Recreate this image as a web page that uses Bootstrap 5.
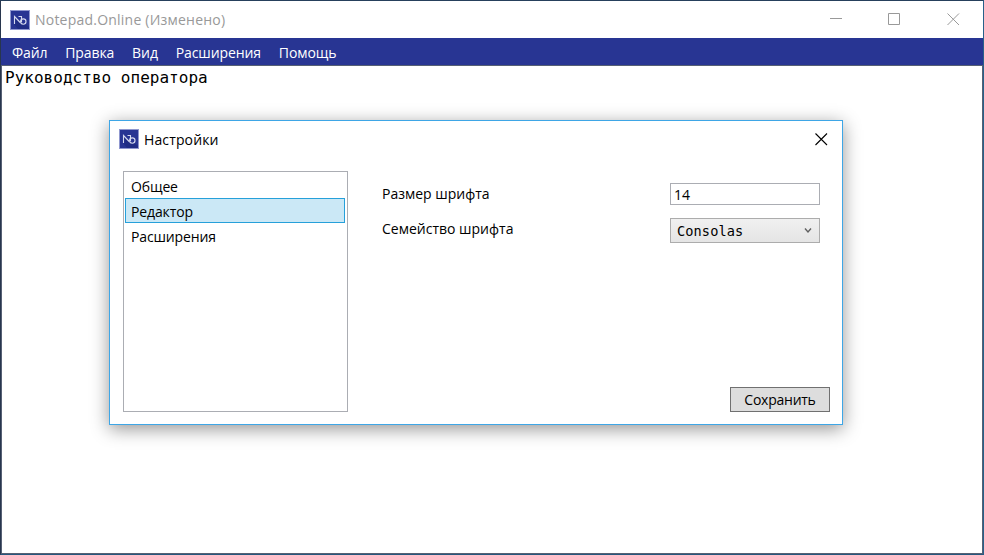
<!DOCTYPE html>
<html lang="ru">
<head>
<meta charset="utf-8">
<title>Notepad.Online</title>
<link href="https://cdn.jsdelivr.net/npm/bootstrap@5.3.0/dist/css/bootstrap.min.css" rel="stylesheet">
<style>
body { font: 14px/20px "Open Sans", "Noto Sans", sans-serif; color: #000; letter-spacing: -.2px; overflow: hidden; }
.app-window { border: 1px solid; border-color: #26405c #28618a #26577d #28364e; }
.title-bar { height: 37px; padding-left: 9px; color: #999; }
.title-bar .caption { margin-left: 5px; letter-spacing: .22px; }
.app-logo { width: 20px; height: 20px; }
.win-buttons { gap: 46px; padding-right: 23px; }
.menu-bar { height: 27px; background: #283593; color: #fff; padding-left: 2px; }
.menu-bar a { color: #fff; padding: 0 8.9px; line-height: 29px; letter-spacing: -.08px; }
.editor { border: 1px solid #566074; font: 16px/20px "DejaVu Sans Mono", monospace; letter-spacing: .02px; padding: 2px 2px 2px 3px; }
.dialog-window { left: 109px; top: 120px; width: 734px; height: 305px; border: 1px solid #3ea6e6; box-shadow: 0 4px 17px rgba(0,0,0,.42); }
.dialog-head { height: 37px; padding: 0 14px 0 9px; }
.dialog-head .app-logo { margin-top: -1px; }
.dialog-head .caption { margin-left: 5px; letter-spacing: .13px; }
.dialog-body { padding: 13px 12px 12px 13px; }
.pages { width: 225px; border: 1px solid #abadb3; padding: 1px 2px 1px 1px; }
.pages .list-group-item { height: 25px; padding: 3px 5px 1px; border: 1px solid transparent; color: #000; background: transparent; line-height: 20px; letter-spacing: -.13px; }
.pages .list-group-item.active { background: #cbe8f6; border-color: #26a0da; margin: 0; }
.field-row { padding: 0 10px 0 34px; }
.field-row label { padding-top: 1px; letter-spacing: 0; }
.family-row { margin-top: 13px; }
.size-input { width: 150px; height: 22px; border: 1px solid #abadb3; padding: 0 3px; color: #000; line-height: 20px; letter-spacing: 0; font-size: 14px; }
.family-box { width: 150px; height: 25px; border: 1px solid #acacac; background: linear-gradient(#f0f0f0,#e5e5e5); font: 13.6px/22px "DejaVu Sans Mono", monospace; letter-spacing: .1px; padding: 0 7px 0 6px; color: #000; }
.save-button { width: 100px; height: 25px; border: 1px solid #707070; background: #ddd; color: #000; line-height: 22px; font-size: 14px; letter-spacing: -.25px; }
</style>
<script src="https://cdn.jsdelivr.net/npm/bootstrap@5.3.0/dist/js/bootstrap.bundle.min.js"></script>
</head>
<body>
<svg class="d-none"><symbol id="logo" viewBox="0 0 20 20"><rect x=".5" y=".5" width="19" height="19" fill="#283593" stroke="#8f97cf"/><path d="M4 14L5 7L10 13L14 13L19 17V19H8Z" fill="#1f2c85"/><path d="M4.5 14V6.5L10.2 12.5M8.5 6.5H11.5V12" fill="none" stroke="#d5d9ee" stroke-width="1.1"/><circle cx="13.3" cy="11.6" r="2.7" fill="none" stroke="#d5d9ee" stroke-width="1.1"/></symbol></svg>
<div class="app-window position-relative d-flex flex-column vh-100 bg-white">
  <header class="title-bar d-flex align-items-center">
    <svg class="app-logo"><use href="#logo"/></svg>
    <span class="caption">Notepad.Online (Изменено)</span>
    <div class="win-buttons d-flex ms-auto">
      <svg width="13" height="13" stroke="#999" fill="none"><path d="M1 5.5H13"/></svg>
      <svg width="13" height="13" stroke="#999" fill="none"><path d="M.5 .5H11.5V11.5H.5Z"/></svg>
      <svg width="13" height="13" stroke="#999" fill="none"><path d="M.5 .5L12 12M12 .5L.5 12"/></svg>
    </div>
  </header>
  <nav class="menu-bar d-flex">
    <a class="text-decoration-none">Файл</a><a class="text-decoration-none">Правка</a><a class="text-decoration-none">Вид</a><a class="text-decoration-none">Расширения</a><a class="text-decoration-none">Помощь</a>
  </nav>
  <main class="editor flex-grow-1">Руководство оператора</main>
</div>
<section class="dialog-window position-absolute bg-white d-flex flex-column">
  <header class="dialog-head d-flex align-items-center">
    <svg class="app-logo"><use href="#logo"/></svg>
    <span class="caption">Настройки</span>
    <svg class="ms-auto" width="13" height="13" stroke="#000" stroke-width="1.1" fill="none"><path d="M.5 .5L12 12M12 .5L.5 12"/></svg>
  </header>
  <div class="dialog-body d-flex flex-grow-1">
    <div class="pages list-group rounded-0">
      <a class="list-group-item">Общее</a>
      <a class="list-group-item active">Редактор</a>
      <a class="list-group-item">Расширения</a>
    </div>
    <div class="d-flex flex-column flex-grow-1">
      <div class="field-row d-flex justify-content-between mt-2 pt-1"><label>Размер шрифта</label><input class="size-input" value="14"></div>
      <div class="field-row family-row d-flex justify-content-between"><label>Семейство шрифта</label>
        <div class="family-box d-flex align-items-center justify-content-between"><span>Consolas</span><svg width="8" height="6" fill="none" stroke="#606060" stroke-width="1.4"><path d="M1 .5L4 3.9L7 .5"/></svg></div></div>
      <button class="save-button btn rounded-0 p-0 mt-auto ms-auto">Сохранить</button>
    </div>
  </div>
</section>
</body>
</html>
